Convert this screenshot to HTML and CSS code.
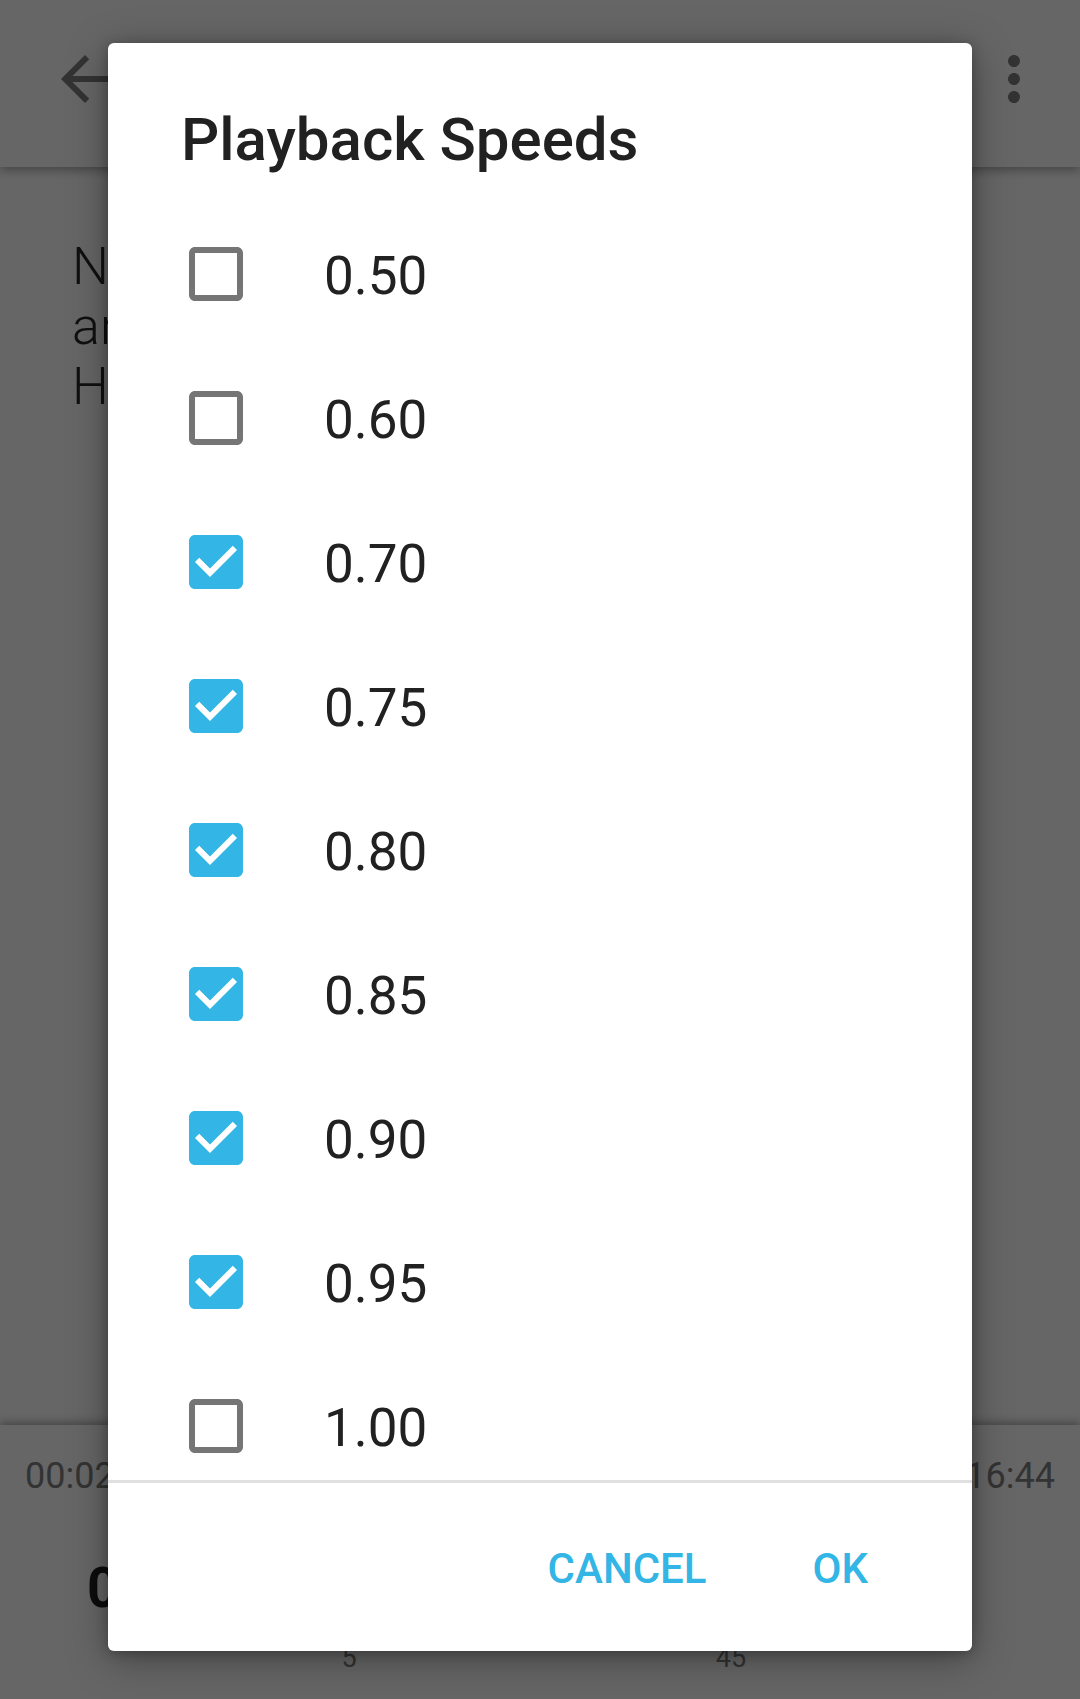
FILE: index.html
```html
<!DOCTYPE html>
<html>
<head>
<meta charset="utf-8">
<link rel="stylesheet" href="styles.css">
</head>
<body>
<div class="screen">
  <header class="appbar">
    <svg class="icon back" viewBox="0 0 24 24"><path d="M20 11H7.83l5.59-5.59L12 4l-8 8 8 8 1.41-1.41L7.83 13H20v-2z"/></svg>
    <svg class="icon more" viewBox="0 0 24 24"><path d="M12 8c1.1 0 2-.9 2-2s-.9-2-2-2-2 .9-2 2 .9 2 2 2zm0 2c-1.1 0-2 .9-2 2s.9 2 2 2 2-.9 2-2-.9-2-2-2zm0 6c-1.1 0-2 .9-2 2s.9 2 2 2 2-.9 2-2-.9-2-2-2z"/></svg>
  </header>
  <main class="content">
    <p class="line">Now</p>
    <p class="line">are</p>
    <p class="line">Here</p>
  </main>
  <footer class="player">
    <div class="times"><span>00:02</span><span>16:44</span></div>
    <div class="speed">0.75</div>
    <div class="skips"><span class="skip s5">5</span><span class="skip s45">45</span></div>
  </footer>
</div>

<div class="scrim"></div>

<div class="dialog">
  <h1 class="title">Playback Speeds</h1>
  <div class="list">
    <div class="row"><svg class="box off" viewBox="3 3 18 18"><path d="M19 5v14H5V5h14m0-2H5c-1.1 0-2 .9-2 2v14c0 1.1.9 2 2 2h14c1.1 0 2-.9 2-2V5c0-1.1-.9-2-2-2z"/></svg><span class="label">0.50</span></div>
    <div class="row"><svg class="box off" viewBox="3 3 18 18"><path d="M19 5v14H5V5h14m0-2H5c-1.1 0-2 .9-2 2v14c0 1.1.9 2 2 2h14c1.1 0 2-.9 2-2V5c0-1.1-.9-2-2-2z"/></svg><span class="label">0.60</span></div>
    <div class="row"><svg class="box on" viewBox="3 3 18 18"><path d="M19 3H5c-1.11 0-2 .9-2 2v14c0 1.1.89 2 2 2h14c1.11 0 2-.9 2-2V5c0-1.1-.89-2-2-2zm-9 14l-5-5 1.41-1.41L10 14.17l7.59-7.59L19 8l-9 9z"/></svg><span class="label">0.70</span></div>
    <div class="row"><svg class="box on" viewBox="3 3 18 18"><path d="M19 3H5c-1.11 0-2 .9-2 2v14c0 1.1.89 2 2 2h14c1.11 0 2-.9 2-2V5c0-1.1-.89-2-2-2zm-9 14l-5-5 1.41-1.41L10 14.17l7.59-7.59L19 8l-9 9z"/></svg><span class="label">0.75</span></div>
    <div class="row"><svg class="box on" viewBox="3 3 18 18"><path d="M19 3H5c-1.11 0-2 .9-2 2v14c0 1.1.89 2 2 2h14c1.11 0 2-.9 2-2V5c0-1.1-.89-2-2-2zm-9 14l-5-5 1.41-1.41L10 14.17l7.59-7.59L19 8l-9 9z"/></svg><span class="label">0.80</span></div>
    <div class="row"><svg class="box on" viewBox="3 3 18 18"><path d="M19 3H5c-1.11 0-2 .9-2 2v14c0 1.1.89 2 2 2h14c1.11 0 2-.9 2-2V5c0-1.1-.89-2-2-2zm-9 14l-5-5 1.41-1.41L10 14.17l7.59-7.59L19 8l-9 9z"/></svg><span class="label">0.85</span></div>
    <div class="row"><svg class="box on" viewBox="3 3 18 18"><path d="M19 3H5c-1.11 0-2 .9-2 2v14c0 1.1.89 2 2 2h14c1.11 0 2-.9 2-2V5c0-1.1-.89-2-2-2zm-9 14l-5-5 1.41-1.41L10 14.17l7.59-7.59L19 8l-9 9z"/></svg><span class="label">0.90</span></div>
    <div class="row"><svg class="box on" viewBox="3 3 18 18"><path d="M19 3H5c-1.11 0-2 .9-2 2v14c0 1.1.89 2 2 2h14c1.11 0 2-.9 2-2V5c0-1.1-.89-2-2-2zm-9 14l-5-5 1.41-1.41L10 14.17l7.59-7.59L19 8l-9 9z"/></svg><span class="label">0.95</span></div>
    <div class="row"><svg class="box off" viewBox="3 3 18 18"><path d="M19 5v14H5V5h14m0-2H5c-1.1 0-2 .9-2 2v14c0 1.1.9 2 2 2h14c1.1 0 2-.9 2-2V5c0-1.1-.9-2-2-2z"/></svg><span class="label">1.00</span></div>
  </div>
  <div class="actions">
    <button class="btn cancel">CANCEL</button>
    <button class="btn ok">OK</button>
  </div>
</div>
</body>
</html>
```

FILE: styles.css
```css
html, body {
  margin: 0;
  padding: 0;
}
body {
  width: 1080px;
  height: 1699px;
  overflow: hidden;
  position: relative;
  font-family: Roboto, "Noto Sans", "Liberation Sans", sans-serif;
  background: #ffffff;
}
.screen {
  width: 1080px;
  height: 1699px;
  display: flex;
  flex-direction: column;
  background: #ffffff;
}
.appbar {
  height: 167px;
  flex: none;
  display: flex;
  justify-content: space-between;
  align-items: flex-start;
  padding: 43px 30px 0 49px;
  box-sizing: border-box;
  background: #ffffff;
  box-shadow: 0 3px 10px rgba(0, 0, 0, 0.35);
  position: relative;
  z-index: 1;
}
.icon {
  width: 72px;
  height: 72px;
  fill: #808080;
}
.content {
  flex: 1;
  padding: 70px 0 0 72px;
}
.line {
  margin: 0;
  font-size: 52px;
  font-weight: 300;
  line-height: 60px;
  color: #2a2a2a;
  white-space: nowrap;
}
.player {
  height: 274px;
  flex: none;
  background: #ffffff;
  box-shadow: 0 -3px 8px rgba(0, 0, 0, 0.3);
  position: relative;
  z-index: 1;
}
.times {
  display: flex;
  justify-content: space-between;
  padding: 0 25px;
  margin-top: 30px;
  font-size: 36px;
  line-height: 42px;
  color: #808080;
}
.speed {
  margin: 59px 0 0 87px;
  font-size: 55px;
  font-weight: 700;
  line-height: 64px;
  color: #222222;
}
.skips {
  display: flex;
  margin-top: 23px;
  font-size: 27px;
  line-height: 30px;
  color: #808080;
}
.skip {
  text-align: center;
  width: 40px;
}
.s5 {
  margin-left: 329px;
}
.s45 {
  margin-left: 342px;
}
.scrim {
  position: absolute;
  inset: 0;
  background: rgba(0, 0, 0, 0.6);
  z-index: 5;
}
.dialog {
  position: absolute;
  left: 108px;
  top: 43px;
  width: 864px;
  height: 1608px;
  background: #ffffff;
  border-radius: 6px;
  box-shadow: 0 8px 40px rgba(0, 0, 0, 0.35), 0 2px 12px rgba(0, 0, 0, 0.25);
  z-index: 10;
  display: flex;
  flex-direction: column;
}
.title {
  margin: 0;
  padding: 61px 0 0 73px;
  font-size: 60px;
  font-weight: 500;
  line-height: 72px;
  color: #212121;
}
.list {
  margin-top: 26px;
  height: 1278px;
  overflow: hidden;
  flex: none;
}
.row {
  height: 144px;
  display: flex;
  align-items: center;
  padding-left: 81px;
}
.box {
  width: 54px;
  height: 54px;
  flex: none;
}
.box.off {
  fill: #757575;
}
.box.on {
  fill: #33b5e5;
}
.label {
  margin-left: 81px;
  padding-top: 3px;
  font-size: 53px;
  line-height: 64px;
  color: #212121;
}
.actions {
  flex: 1;
  border-top: 3px solid #e0e0e0;
  display: flex;
  justify-content: flex-end;
  align-items: center;
  padding: 4px 80px 0 0;
  gap: 58px;
}
.btn {
  background: none;
  border: none;
  padding: 0 24px;
  margin: 0;
  font-family: Roboto, "Noto Sans", "Liberation Sans", sans-serif;
  font-size: 42px;
  font-weight: 500;
  line-height: 50px;
  color: #33b5e5;
}
```
